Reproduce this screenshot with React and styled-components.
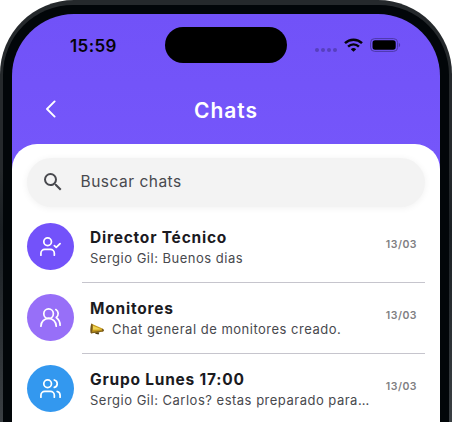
import React from 'react'
import styled, { createGlobalStyle } from 'styled-components'
import { UserCheck, Users, UsersRound } from 'lucide-react'
import { MdSearch } from 'react-icons/md'

const GlobalStyle = createGlobalStyle`
    * {
        box-sizing: border-box;
    }

    body {
        margin: 0;
        background: #fff;
        overflow: hidden;
        font-family: Inter, "Liberation Sans", sans-serif;
    }
`

const Viewport = styled.div`
    width: 453px;
    height: 422px;
    overflow: hidden;
`

const Frame = styled.div`
    width: 452px;
    height: 520px;
    padding: 5px 3px 0;
    background: linear-gradient(#25292c 170px, #1b2024 230px, #3a3f43 420px);
    border-radius: 74px 74px 0 0;
`

const Bezel = styled.div`
    height: 100%;
    padding: 9px 9px 0;
    background: #020609;
    border-radius: 70px 70px 0 0;
`

const Screen = styled.div`
    height: 100%;
    overflow: hidden;
    background: linear-gradient(#7152f8, #7556fa 140px);
    border-radius: 62px 62px 0 0;
`

const StatusBar = styled.div`
    height: 63px;
    padding: 13px 39px 0 58px;
    display: flex;
    align-items: flex-start;
    justify-content: space-between;
`

const Clock = styled.div`
    width: 95px;
    padding-top: 8px;
    font-size: 17px;
    line-height: 22px;
    font-weight: 600;
    letter-spacing: 0.4px;
    color: #050308;
`

const Island = styled.div`
    width: 122px;
    height: 36px;
    background: #000;
    border-radius: 18px;
`

const StatusIcons = styled.div`
    width: 114px;
    height: 36px;
    display: flex;
    align-items: center;
    justify-content: flex-end;
    gap: 7px;
`

const SignalDots = styled.div`
    display: flex;
    gap: 2px;
    padding-top: 10px;
`

const Dot = styled.span`
    width: 4px;
    height: 4px;
    border-radius: 50%;
    background: #573fbe;
`

const Header = styled.div`
    height: 67px;
    padding: 0 34px;
    display: grid;
    grid-template-columns: 60px 1fr 60px;
`

const BackButton = styled.button`
    width: 10px;
    height: 18px;
    margin-top: 23px;
    padding: 0;
    border: none;
    background: none;
    display: flex;
`

const Title = styled.h1`
    margin: 20px 0 0;
    font-size: 21px;
    line-height: 28px;
    font-weight: 600;
    letter-spacing: 1px;
    text-align: center;
    color: #fff;
`

const Sheet = styled.div`
    height: 380px;
    padding: 14px 15px 0;
    background: #fff;
    border-radius: 25px 25px 0 0;
`

const SearchBox = styled.div`
    height: 49px;
    padding: 0 0 2px 14px;
    display: flex;
    align-items: center;
    gap: 15.5px;
    background: #f3f3f3;
    border-radius: 25px;
    box-shadow: 0 1px 7px rgba(0, 0, 0, 0.06);
    font-size: 15.5px;
    letter-spacing: 0.5px;
    color: #48494e;
`

const ChatList = styled.div`
    padding-top: 5px;
`

const ChatRow = styled.div`
    height: 71px;
    display: flex;
`

const Avatar = styled.div`
    width: 47px;
    height: 47px;
    margin: 11.4px 7.6px 0 0.4px;
    flex-shrink: 0;
    display: flex;
    align-items: center;
    justify-content: center;
    border-radius: 50%;
    background: ${props => props.$color};
    color: #fff;
`

const ChatBody = styled.div`
    flex: 1;
    min-width: 0;
    padding: 15px 8px 0;
    display: flex;
    border-bottom: 1px solid #c6c5cd;
`

const ChatText = styled.div`
    flex: 1;
    min-width: 0;
`

const ChatName = styled.div`
    font-size: 15.5px;
    line-height: 21px;
    font-weight: 700;
    letter-spacing: 0.78px;
    color: #1b1b1f;
`

const ChatMessage = styled.div`
    display: flex;
    align-items: center;
    gap: 7px;
    font-size: 13px;
    line-height: 20px;
    letter-spacing: 0.5px;
    white-space: nowrap;
    color: #48494e;
`

const ChatDate = styled.div`
    padding-top: 11px;
    font-size: 10.5px;
    line-height: 14px;
    font-weight: 600;
    letter-spacing: 0.5px;
    color: #808083;
`

const WifiIcon = () => (
    <svg width="19" height="14" viewBox="0 0 19 14" fill="none" stroke="#050308" strokeWidth="2.4">
        <path d="M1 5.2a12.2 12.2 0 0 1 17 0" />
        <path d="M4.1 8.6a7.6 7.6 0 0 1 10.8 0" />
        <path d="M9.5 13.8L6.8 11.2a3.9 3.9 0 0 1 5.4 0z" fill="#050308" stroke="none" />
    </svg>
)

const BatteryIcon = () => (
    <svg width="31" height="14" viewBox="0 0 31 14">
        <rect x="0.6" y="0.6" width="27" height="12.8" rx="4" fill="none" stroke="#4c37a8" />
        <rect x="2.5" y="2.3" width="23.2" height="9.4" rx="2.6" fill="#000" />
        <path d="M28.9 4.8c1.6.7 1.6 3.7 0 4.4z" fill="#4c37a8" />
    </svg>
)

const BackIcon = () => (
    <svg width="10" height="18" viewBox="0 0 10 18" fill="none" stroke="#fff" strokeWidth="1.9" strokeLinecap="round" strokeLinejoin="round">
        <path d="M8.6 1.4L1 9l7.6 7.6" />
    </svg>
)

const MegaphoneIcon = () => (
    <svg width="15" height="12" viewBox="0 0 15 12">
        <path d="M5 8.4l4.4 1.2-.8 1.9-3.2-.8z" fill="#4c3c16" />
        <path d="M1.6.7L12.4 5.6c1.4.8 1.6 2.4.4 3L.9 10.2z" fill="#c59a1d" />
        <path d="M2.4 2.6l9.6 4-9.2.2z" fill="#f0d452" />
        <path d="M1.2 9.1l11.4-1.6.2 1.1L.9 10.4z" fill="#80611a" />
        <ellipse cx="1.5" cy="5.4" rx="1.1" ry="4.9" fill="#765719" transform="rotate(5 1.5 5.4)" />
        <path d="M12 5.4c2.2.6 2.5 2.6.7 3.3z" fill="#5c421e" />
    </svg>
)

const chats = [
    { name: 'Director Técnico', message: 'Sergio Gil: Buenos dias', date: '13/03', color: '#7352fa', icon: UserCheck },
    { name: 'Monitores', message: 'Chat general de monitores creado.', date: '13/03', color: '#976ff8', icon: UsersRound, announcement: true },
    { name: 'Grupo Lunes 17:00', message: 'Sergio Gil: Carlos? estas preparado para…', date: '13/03', color: '#3398ef', icon: Users },
]

const Chat = ({ chat }) => {
    const Icon = chat.icon
    return (
        <ChatRow>
            <Avatar $color={chat.color}>
                <Icon size={23} strokeWidth={1.8} />
            </Avatar>
            <ChatBody>
                <ChatText>
                    <ChatName>{chat.name}</ChatName>
                    <ChatMessage>
                        {chat.announcement && <MegaphoneIcon />}
                        <span>{chat.message}</span>
                    </ChatMessage>
                </ChatText>
                <ChatDate>{chat.date}</ChatDate>
            </ChatBody>
        </ChatRow>
    )
}

const App = () => {
    return (
        <Viewport>
            <GlobalStyle />
            <Frame>
                <Bezel>
                    <Screen>
                        <StatusBar>
                            <Clock>15:59</Clock>
                            <Island />
                            <StatusIcons>
                                <SignalDots>
                                    <Dot /><Dot /><Dot /><Dot />
                                </SignalDots>
                                <WifiIcon />
                                <BatteryIcon />
                            </StatusIcons>
                        </StatusBar>
                        <Header>
                            <BackButton aria-label="Volver"><BackIcon /></BackButton>
                            <Title>Chats</Title>
                        </Header>
                        <Sheet>
                            <SearchBox>
                                <MdSearch size={24} />
                                <span>Buscar chats</span>
                            </SearchBox>
                            <ChatList>
                                {chats.map(chat => <Chat key={chat.name} chat={chat} />)}
                            </ChatList>
                        </Sheet>
                    </Screen>
                </Bezel>
            </Frame>
        </Viewport>
    )
}

export default App
